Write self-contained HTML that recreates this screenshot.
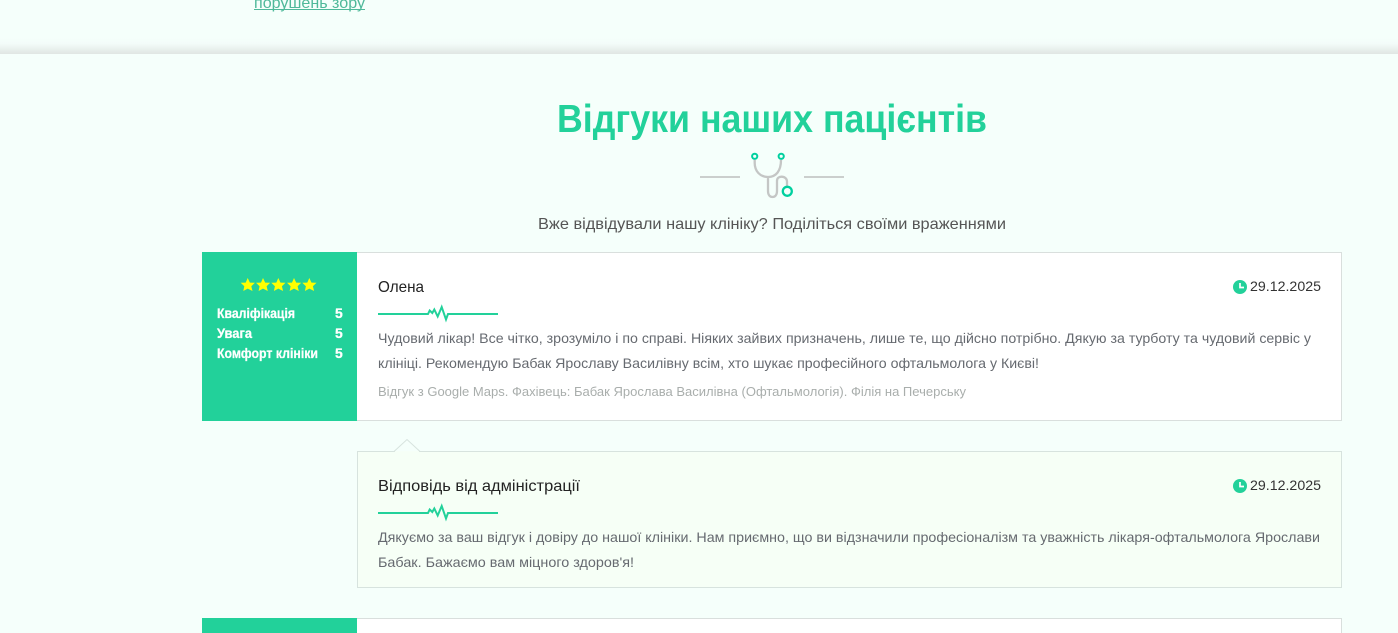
<!DOCTYPE html>
<html lang="uk">
<head>
<meta charset="utf-8">
<title>Відгуки наших пацієнтів</title>
<style>
html,body{margin:0;padding:0;width:1398px;height:633px;overflow:hidden;background:#f5fffb}
body{position:relative;font-family:"Liberation Sans",sans-serif}
.abs{position:absolute;box-sizing:border-box}
.band{left:0;top:38px;width:1398px;height:16px;background:linear-gradient(to bottom,#f5fffb 0%,#f3fcf9 35%,#e0e6e3 100%)}
.card{left:202px;width:1140px;background:#fff;border:1px solid #d9dfdd}
.side{left:202px;width:155px;background:#22d19a}
.reply{left:357px;top:451px;width:985px;height:137px;background:#f6fff6;border:1px solid #d7e3de}
svg{position:absolute;left:0;top:0}
text{font-family:"Liberation Sans",sans-serif}
.b{font-size:13.6px;fill:#666a70}
.d{font-size:14px;fill:#333}
.n{font-size:15.6px;fill:#222}
.s{font-size:14px;font-weight:bold;fill:#fff;stroke:#fff;stroke-width:.25px}
</style>
</head>
<body>
<div class="abs band"></div>
<div class="abs card" style="top:252px;height:169px"></div>
<div class="abs side" style="top:252px;height:169px"></div>
<div class="abs reply"></div>
<div class="abs card" style="top:618px;height:40px"></div>
<div class="abs side" style="top:618px;height:15px"></div>
<svg width="1398" height="633" viewBox="0 0 1398 633" xmlns="http://www.w3.org/2000/svg">
  <text x="254" y="8" font-size="16" fill="#4fb99a" textLength="111" lengthAdjust="spacingAndGlyphs">порушень зору</text>
  <line x1="254" x2="365" y1="9.5" y2="9.5" stroke="#4fb99a" stroke-width="1"/>

  <text x="557" y="132" font-size="39" font-weight="bold" fill="#22d19a" textLength="430" lengthAdjust="spacingAndGlyphs">Відгуки наших пацієнтів</text>

  <g fill="none">
    <path d="M700 177H740M804 177H844" stroke="#cbcfcd" stroke-width="2"/>
    <path d="M754.7 160V163C754.700 171 760 177 768 177C776 177 781 171 781 160M768 177V191C768 195 770 197 772.500 197C775 197 777 195 777 191V181C777 178 779 176.700 781.500 176.700C784.500 176.700 787 178.500 787 181.500V186" stroke="#c4c6c5" stroke-width="2.300"/>
    <circle cx="754.700" cy="156.300" r="2.600" stroke="#00d09f" stroke-width="2" fill="#f5fffb"/>
    <circle cx="781.200" cy="156.300" r="2.600" stroke="#00d09f" stroke-width="2" fill="#f5fffb"/>
    <circle cx="787.300" cy="191.300" r="4.500" stroke="#00d09f" stroke-width="2.300" fill="#f5fffb"/>
  </g>

  <text x="538" y="229" font-size="15.600" fill="#555" textLength="468" lengthAdjust="spacingAndGlyphs">Вже відвідували нашу клініку? Поділіться своїми враженнями</text>

  <g fill="#ffff00">
    <path d="M247.700 278l2.200 4.600 5 .2-3.600 3.400 1.200 4.800-4.800-2.400-4.400 2.400 1-4.800-3.600-3.400 5-.2z"/>
    <path d="M263 278l2.200 4.600 5 .2-3.600 3.400 1.200 4.800-4.800-2.400-4.400 2.400 1-4.800-3.600-3.400 5-.2z"/>
    <path d="M278.300 278l2.200 4.600 5 .2-3.600 3.400 1.200 4.800-4.800-2.400-4.400 2.400 1-4.800-3.600-3.400 5-.2z"/>
    <path d="M294 278l2.200 4.600 5 .2-3.600 3.400 1.200 4.800-4.800-2.400-4.400 2.400 1-4.800-3.600-3.400 5-.2z"/>
    <path d="M309.300 278l2.200 4.600 5 .2-3.600 3.400 1.200 4.800-4.800-2.400-4.400 2.400 1-4.800-3.600-3.400 5-.2z"/>
  </g>
  <text class="s" x="217" y="318" textLength="78" lengthAdjust="spacingAndGlyphs">Кваліфікація</text>
  <text class="s" x="335" y="318">5</text>
  <text class="s" x="217" y="338" textLength="35" lengthAdjust="spacingAndGlyphs">Увага</text>
  <text class="s" x="335" y="338">5</text>
  <text class="s" x="217" y="358" textLength="101" lengthAdjust="spacingAndGlyphs">Комфорт клініки</text>
  <text class="s" x="335" y="358">5</text>

  <text class="n" x="378" y="292" textLength="46" lengthAdjust="spacingAndGlyphs">Олена</text>
  <g>
    <circle cx="1240" cy="287" r="7" fill="#22d19a"/>
    <path d="M1240 283V287.500H1244" fill="none" stroke="#fff" stroke-width="1.700"/>
  </g>
  <text class="d" x="1250" y="291" textLength="71" lengthAdjust="spacingAndGlyphs">29.12.2025</text>
  <path d="M378 314H428L429.700 310.500 432.300 313 434.300 309.500 437.700 316.500 441.700 307 446 319.500 448 314H498" fill="none" stroke="#22d19a" stroke-width="2"/>
  <text class="b" x="378" y="343" textLength="933" lengthAdjust="spacingAndGlyphs">Чудовий лікар! Все чітко, зрозуміло і по справі. Ніяких зайвих призначень, лише те, що дійсно потрібно. Дякую за турботу та чудовий сервіс у</text>
  <text class="b" x="378" y="368" textLength="661" lengthAdjust="spacingAndGlyphs">клініці. Рекомендую Бабак Ярославу Василівну всім, хто шукає професійного офтальмолога у Києві!</text>
  <text x="378" y="396" font-size="12.600" fill="#a9aeac" textLength="588" lengthAdjust="spacingAndGlyphs">Відгук з Google Maps. Фахівець: Бабак Ярослава Василівна (Офтальмологія). Філія на Печерську</text>

  <path d="M394 451.500L407 439.500 420 451.500" fill="#f5fffb" stroke="#d7e3de" stroke-width="1"/>
  <path d="M395 452H419" stroke="#f6fff6" stroke-width="1.500"/>

  <text class="n" x="378" y="491" textLength="202" lengthAdjust="spacingAndGlyphs">Відповідь від адміністрації</text>
  <g>
    <circle cx="1240" cy="486" r="7" fill="#22d19a"/>
    <path d="M1240 482V486.500H1244" fill="none" stroke="#fff" stroke-width="1.700"/>
  </g>
  <text class="d" x="1250" y="490" textLength="71" lengthAdjust="spacingAndGlyphs">29.12.2025</text>
  <path d="M378 513H428L429.700 509.500 432.300 512 434.300 508.500 437.700 515.500 441.700 506 446 518.500 448 513H498" fill="none" stroke="#22d19a" stroke-width="2"/>
  <text class="b" x="378" y="542" textLength="942" lengthAdjust="spacingAndGlyphs">Дякуємо за ваш відгук і довіру до нашої клініки. Нам приємно, що ви відзначили професіоналізм та уважність лікаря-офтальмолога Ярослави</text>
  <text class="b" x="378" y="567" textLength="256" lengthAdjust="spacingAndGlyphs">Бабак. Бажаємо вам міцного здоров'я!</text>
</svg>
</body>
</html>
